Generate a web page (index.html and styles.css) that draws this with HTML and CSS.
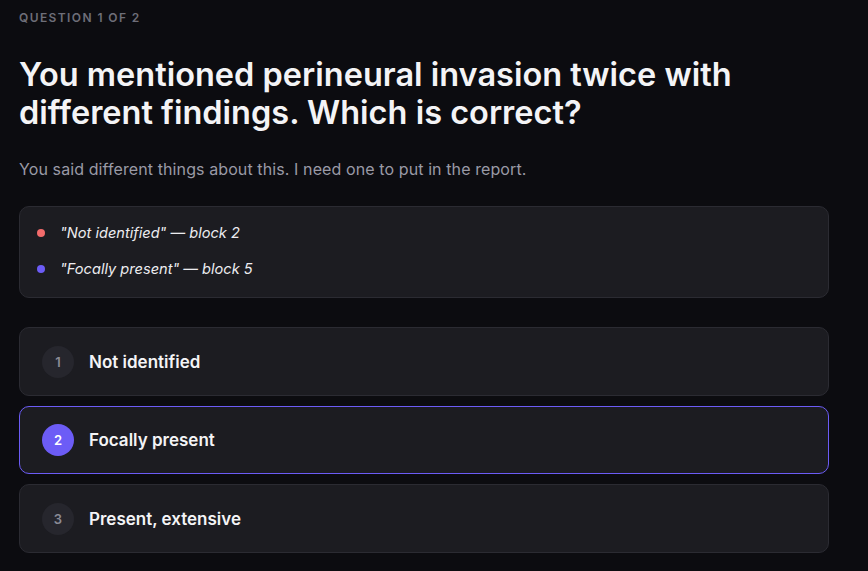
FILE: index.html
```html
<!DOCTYPE html>
<html lang="en">
<head>
  <meta charset="UTF-8" />
  <meta name="viewport" content="width=device-width, initial-scale=1.0" />
  <title>Clarification</title>
  <link rel="stylesheet" href="styles.css">
</head>
<body>
  <div class="question">
    <div class="question-label">Question 1 of 2</div>
    <h1>You mentioned perineural invasion twice with different findings. Which is correct?</h1>
    <p class="question-sub">You said different things about this. I need one to put in the report.</p>

    <div class="conflict-box">
      <div class="conflict-item">
        <span class="dot dot-red"></span>
        <span class="conflict-text">"Not identified" — block 2</span>
      </div>
      <div class="conflict-item">
        <span class="dot dot-purple"></span>
        <span class="conflict-text">"Focally present" — block 5</span>
      </div>
    </div>

    <div class="options">
      <button class="option">
        <span class="option-num">1</span>
        <span class="option-text">Not identified</span>
      </button>
      <button class="option selected">
        <span class="option-num">2</span>
        <span class="option-text">Focally present</span>
      </button>
      <button class="option">
        <span class="option-num">3</span>
        <span class="option-text">Present, extensive</span>
      </button>
    </div>
  </div>
</body>
</html>
```

FILE: styles.css
```css
* {
  box-sizing: border-box;
  margin: 0;
  padding: 0;
}
body {
  font-family: Inter, "Noto Sans", sans-serif;
  background-color: #0c0c10;
  color: #f4f4f6;
  padding: 10px 19px 0;
}
.question {
  width: 810px;
}
.question-label {
  font-size: 12px;
  font-weight: 600;
  letter-spacing: 1.4px;
  text-transform: uppercase;
  color: #6e6e78;
  line-height: 16px;
}
h1 {
  font-size: 32.5px;
  font-weight: 600;
  line-height: 38px;
  margin-top: 30px;
  max-width: 760px;
}
.question-sub {
  font-size: 16px;
  letter-spacing: 0.1px;
  line-height: 22px;
  color: #9a9aa6;
  margin-top: 26px;
}
.conflict-box {
  margin-top: 26px;
  background: #1c1c21;
  border: 1px solid #2b2b32;
  border-radius: 10px;
  padding: 15px 20px 17px 17px;
  display: flex;
  flex-direction: column;
  gap: 14px;
}
.conflict-item {
  display: flex;
  align-items: center;
  gap: 15px;
  height: 22px;
}
.dot {
  width: 8px;
  height: 8px;
  border-radius: 50%;
  flex-shrink: 0;
}
.dot-red {
  background: #f26b6b;
}
.dot-purple {
  background: #6c5cf6;
}
.conflict-text {
  font-size: 14.6px;
  font-style: italic;
  color: #ececf0;
}
.options {
  margin-top: 29px;
  display: flex;
  flex-direction: column;
  gap: 10px;
}
.option {
  display: flex;
  align-items: center;
  gap: 15px;
  width: 100%;
  height: 69px;
  padding: 0 22px;
  background: #1c1c21;
  border: 1px solid #2b2b32;
  border-radius: 10px;
  font-family: inherit;
  text-align: left;
  cursor: pointer;
}
.option.selected {
  border-color: #6c5cf6;
  height: 68px;
}
.option-num {
  width: 32px;
  height: 32px;
  border-radius: 50%;
  background: #26262d;
  color: #8b8b96;
  font-size: 13px;
  font-weight: 600;
  display: flex;
  align-items: center;
  justify-content: center;
  flex-shrink: 0;
}
.selected .option-num {
  background: #6c5cf6;
  color: #fff;
}
.option-text {
  font-size: 17px;
  font-weight: 600;
  color: #f4f4f6;
}
```
